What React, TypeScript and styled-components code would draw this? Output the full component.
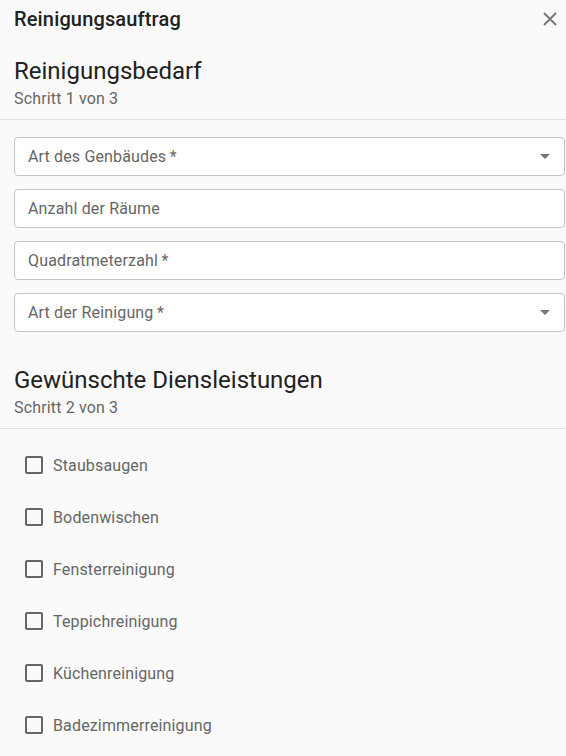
import React from "react";
import styled, { createGlobalStyle } from "styled-components";

const GlobalStyle = createGlobalStyle`
  html, body {
    margin: 0;
    padding: 0;
    background: #fafafa;
    font-family: Roboto, "Noto Sans", Arial, sans-serif;
    color: #212121;
  }
  * { box-sizing: border-box; }
`;

const Page = styled.div`
  width: 566px;
  overflow: hidden;
`;

const TitleBar = styled.header`
  display: flex;
  align-items: center;
  justify-content: space-between;
  height: 38px;
  padding: 0 4px 0 14px;
`;

const DialogTitle = styled.h1`
  margin: 0;
  font-size: 20px;
  font-weight: 500;
  letter-spacing: 0.15px;
  color: #212121;
`;

const CloseButton = styled.button`
  display: flex;
  align-items: center;
  justify-content: center;
  width: 24px;
  height: 24px;
  padding: 0;
  border: none;
  background: transparent;
  color: #757575;
  cursor: pointer;
`;

const StepHeader = styled.div<{ $top: number }>`
  padding: ${(p) => p.$top}px 14px 8px;
  border-bottom: 1px solid #e0e0e0;
`;

const StepTitle = styled.h2`
  margin: 0;
  font-size: 24px;
  font-weight: 400;
  line-height: 32px;
  color: #212121;
`;

const StepSub = styled.div`
  font-size: 16px;
  line-height: 24px;
  letter-spacing: 0.15px;
  color: #666;
`;

const Fields = styled.div`
  display: flex;
  flex-direction: column;
  gap: 13px;
  padding: 17px 1px 0 14px;
`;

const Field = styled.div`
  display: flex;
  align-items: center;
  justify-content: space-between;
  height: 39px;
  padding: 0 14px 0 13px;
  background: #fff;
  border: 1px solid #c4c4c4;
  border-radius: 4px;
  font-size: 16px;
  letter-spacing: 0.15px;
  color: #666;
`;

const Arrow = styled.span`
  width: 0;
  height: 0;
  border-left: 5px solid transparent;
  border-right: 5px solid transparent;
  border-top: 5px solid #757575;
`;

const Checks = styled.div`
  display: flex;
  flex-direction: column;
  padding: 10px 14px 0 25px;
`;

const CheckRow = styled.label`
  display: flex;
  align-items: center;
  gap: 10px;
  height: 52px;
  font-size: 16px;
  letter-spacing: 0.15px;
  color: #666;
`;

const Box = styled.span`
  flex: none;
  width: 18px;
  height: 18px;
  border: 2px solid #666;
  border-radius: 2px;
  background: transparent;
`;

const fields = [
  { label: "Art des Genbäudes", required: true, select: true },
  { label: "Anzahl der Räume", required: false, select: false },
  { label: "Quadratmeterzahl", required: true, select: false },
  { label: "Art der Reinigung", required: true, select: true },
];

const services = [
  "Staubsaugen",
  "Bodenwischen",
  "Fensterreinigung",
  "Teppichreinigung",
  "Küchenreinigung",
  "Badezimmerreinigung",
];

export default function App() {
  return (
    <Page>
      <GlobalStyle />
      <TitleBar>
        <DialogTitle>Reinigungsauftrag</DialogTitle>
        <CloseButton aria-label="Schließen">
          <svg width="16" height="16" viewBox="0 0 16 16">
            <path d="M2 2 L14 14 M14 2 L2 14" stroke="currentColor" strokeWidth="1.8" />
          </svg>
        </CloseButton>
      </TitleBar>

      <StepHeader $top={17}>
        <StepTitle>Reinigungsbedarf</StepTitle>
        <StepSub>Schritt 1 von 3</StepSub>
      </StepHeader>

      <Fields>
        {fields.map((f) => (
          <Field key={f.label}>
            <span>
              {f.label}
              {f.required && "\u2009*"}
            </span>
            {f.select && <Arrow />}
          </Field>
        ))}
      </Fields>

      <StepHeader $top={32}>
        <StepTitle>Gewünschte Diensleistungen</StepTitle>
        <StepSub>Schritt 2 von 3</StepSub>
      </StepHeader>

      <Checks>
        {services.map((s) => (
          <CheckRow key={s}>
            <Box />
            {s}
          </CheckRow>
        ))}
      </Checks>
    </Page>
  );
}
